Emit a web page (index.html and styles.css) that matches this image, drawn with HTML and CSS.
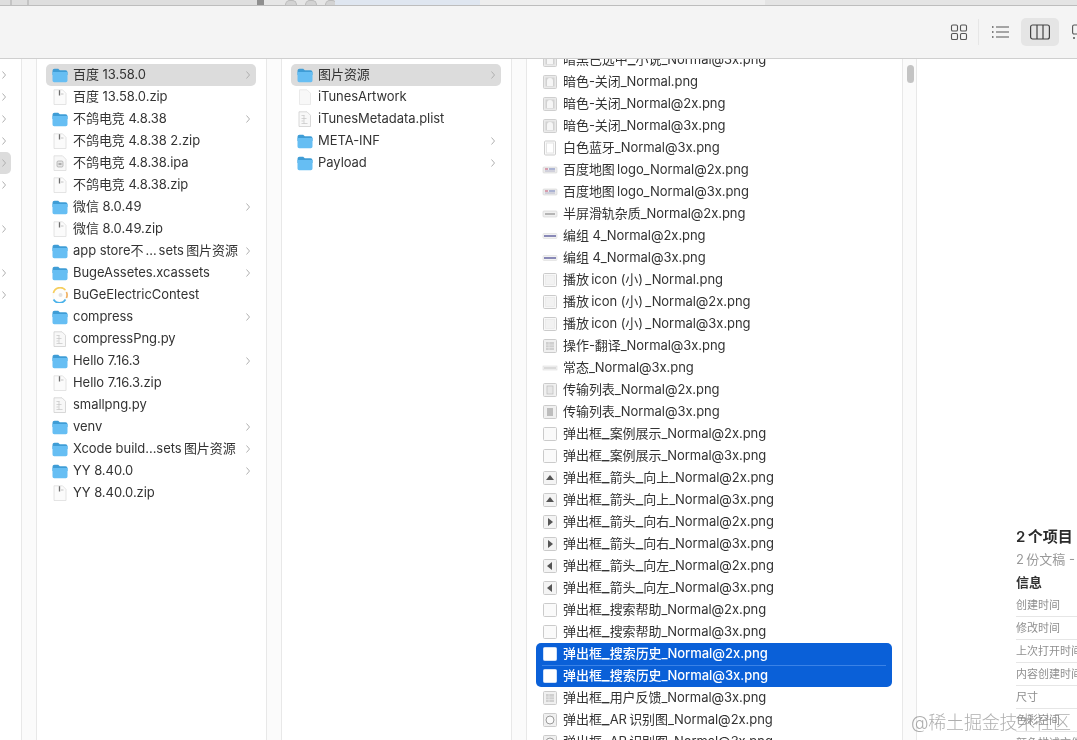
FILE: index.html
```html
<!DOCTYPE html>
<html lang="zh">
<head>
<meta charset="utf-8">
<title>Finder</title>
<link rel="stylesheet" href="styles.css">
</head>
<body>
<svg class="defs" xmlns="http://www.w3.org/2000/svg">
  <symbol id="folder" viewBox="0 0 16 16"><path d="M.5 3.800a2 2 0 0 1 2-2h3.700l1.600 1.500h5.700a2 2 0 0 1 2 2V8H.5z" fill="#3f9dd6"/><path d="M.5 5h15v8.600a1.700 1.700 0 0 1-1.700 1.700H2.200A1.700 1.700 0 0 1 .5 13.600z" fill="#66bef3"/></symbol>
  <symbol id="zip" viewBox="0 0 16 16"><path d="M2 .8h8.500l3.500 3.500v11.200H2z" fill="#fbfbfb" stroke="#dddddd" stroke-width=".8"/><path d="M7.500 1.200v5.300" stroke="#6e6e6e" stroke-width="1.300"/><path d="M9 5h2.500" stroke="#c4c4c4"/></symbol>
  <symbol id="blankdoc" viewBox="0 0 16 16"><path d="M2.500 .8h7.500l3.500 3.500v11.200h-11z" fill="#f8f8f8" stroke="#e6e6e6" stroke-width=".8"/></symbol>
  <symbol id="doc" viewBox="0 0 16 16"><path d="M2 .8h8l3.500 3.500v11.200H2z" fill="#f8f8f8" stroke="#cfcfcf" stroke-width=".8"/><path d="M4.500 4.500h3M4.500 7.500h5M4.500 10h2M4.500 12.500h6M7 4.500v8" stroke="#c4c4c4" stroke-width=".7" fill="none"/></symbol>
  <symbol id="ipa" viewBox="0 0 16 16"><path d="M2 .8h8.500l3.500 3.500v11.200H2z" fill="#f8f8f8" stroke="#dcdcdc" stroke-width=".8"/><rect x="5" y="6" width="6" height="6" rx="1.200" fill="#e6e6e6" stroke="#999" stroke-width=".6"/><path d="M6.500 9h3" stroke="#777"/></symbol>
  <symbol id="app" viewBox="0 0 16 16"><circle cx="8" cy="8" r="7.200" fill="#fdfdfd" stroke="#eee" stroke-width=".5"/><path d="M1.400 6a7 7 0 0 1 12-3" fill="none" stroke="#f6ce5c" stroke-width="1.700"/><path d="M14.400 5a7 7 0 0 1 0 6" fill="none" stroke="#f2b264" stroke-width="1.700"/><path d="M13.500 12.500a7 7 0 0 1-12 0" fill="none" stroke="#4ab2ea" stroke-width="1.700"/><circle cx="8.500" cy="8" r="2" fill="#e2e2e2"/></symbol>
  <symbol id="thumb" viewBox="0 0 16 16"><rect x="1.500" y="1.500" width="13" height="13" rx="1" fill="#fafafa" stroke="#cbcbcb"/></symbol>
  <symbol id="face" viewBox="0 0 16 16"><rect x="1.500" y="1.500" width="13" height="13" rx="1" fill="#eaeaea" stroke="#cfcfcf"/><rect x="3.500" y="3.500" width="9" height="9" fill="#d2d2d2"/><path d="M5 12V7a3 3 0 0 1 6 0v5z" fill="#f6f6f6"/></symbol>
  <symbol id="narrow" viewBox="0 0 16 16"><rect x="2.500" y="1" width="11" height="14" rx="1" fill="#fafafa" stroke="#cdcdcd"/><rect x="4.500" y="3" width="7" height="10" fill="#fff" stroke="#e4e4e4"/></symbol>
  <symbol id="logo" viewBox="0 0 16 16"><rect x="1" y="5" width="14" height="6" rx="1" fill="#ececec" stroke="#d4d4d4" stroke-width=".6"/><path d="M3 7h3" stroke="#c05070" stroke-width="1"/><path d="M7 7h6" stroke="#6a7ab8" stroke-width="1"/><path d="M3 9h10" stroke="#a8a8c4" stroke-width=".8"/></symbol>
  <symbol id="bar" viewBox="0 0 16 16"><rect x="1" y="5" width="14" height="6" rx="1" fill="#f0f0f0" stroke="#d0d0d0" stroke-width=".6"/><rect x="3" y="7" width="10" height="2" fill="#b5b5b5"/></symbol>
  <symbol id="barp" viewBox="0 0 16 16"><rect x="1" y="5.500" width="14" height="5" rx="1" fill="#f2f2f2" stroke="#dcdcdc" stroke-width=".6"/><rect x="2" y="7.200" width="12" height="1.600" fill="#6f6fa8"/></symbol>
  <symbol id="line" viewBox="0 0 16 16"><rect x="1" y="6" width="14" height="4" fill="#f2f2f2" stroke="#dcdcdc" stroke-width=".6"/><rect x="2" y="7.500" width="12" height="1" fill="#c2c2c2"/></symbol>
  <symbol id="play" viewBox="0 0 16 16"><rect x="1.500" y="1.500" width="13" height="13" rx="1" fill="#f8f8f8" stroke="#cbcbcb"/><rect x="3.500" y="3.500" width="9" height="9" fill="#f2f2f2" stroke="#e4e4e4" stroke-width=".5"/></symbol>
  <symbol id="grid" viewBox="0 0 16 16"><rect x="1.500" y="1.500" width="13" height="13" rx="1" fill="#f0f0f0" stroke="#cbcbcb"/><rect x="4" y="4" width="8" height="8" fill="#cfcfcf"/><path d="M4 7h8M4 9.500h8M7 4v8" stroke="#eee" stroke-width=".6"/></symbol>
  <symbol id="lines" viewBox="0 0 16 16"><rect x="1.500" y="1.500" width="13" height="13" rx="1" fill="#f0f0f0" stroke="#cbcbcb"/><rect x="5" y="4" width="6" height="8" fill="#e6e6e6" stroke="#bcbcbc" stroke-width=".7"/></symbol>
  <symbol id="lines2" viewBox="0 0 16 16"><rect x="1.500" y="1.500" width="13" height="13" rx="1" fill="#f0f0f0" stroke="#cbcbcb"/><rect x="5" y="4" width="6" height="8" fill="#bdbdbd"/></symbol>
  <symbol id="up" viewBox="0 0 16 16"><rect x="1.500" y="1.500" width="13" height="13" rx="1" fill="#f4f4f4" stroke="#cbcbcb"/><path d="M8 5l4 5H4z" fill="#555"/></symbol>
  <symbol id="right" viewBox="0 0 16 16"><rect x="1.500" y="1.500" width="13" height="13" rx="1" fill="#f4f4f4" stroke="#cbcbcb"/><path d="M6 4l5 4-5 4z" fill="#555"/></symbol>
  <symbol id="left" viewBox="0 0 16 16"><rect x="1.500" y="1.500" width="13" height="13" rx="1" fill="#f4f4f4" stroke="#cbcbcb"/><path d="M10 4l-5 4 5 4z" fill="#555"/></symbol>
  <symbol id="white" viewBox="0 0 16 16"><rect x="1.500" y="1.500" width="13" height="13" rx="1" fill="#fff" stroke="#cfe0f8"/></symbol>
  <symbol id="circle" viewBox="0 0 16 16"><rect x="1.500" y="1.500" width="13" height="13" rx="1" fill="#f0f0f0" stroke="#cbcbcb"/><circle cx="8" cy="8" r="4" fill="#fafafa" stroke="#9a9a9a"/></symbol>
  <symbol id="chev" viewBox="0 0 6 10"><path d="M1.500 1.500L4.500 5 1.500 8.500" fill="none" stroke="#b0b0b0" stroke-width="1"/></symbol>
</svg>

<div class="window">
  <div class="backdrop">
    <div class="bd bd-a"><i class="tick"></i><i class="tick"></i></div><div class="bd bd-dark"></div><div class="bd bd-b"><i class="dot"></i><i class="dot"></i><i class="dot"></i></div><div class="bd bd-blue"></div><div class="bd bd-c"></div><div class="bd bd-d"></div>
  </div>
  <header class="toolbar">
    <svg class="tool" width="18" height="18" viewBox="0 0 18 18"><g fill="none" stroke="#555" stroke-width="1.100"><rect x="1.500" y="2" width="6" height="6" rx="1.300"/><rect x="10.500" y="2" width="6" height="6" rx="1.300"/><rect x="1.500" y="10.500" width="6" height="6" rx="1.300"/><rect x="10.500" y="10.500" width="6" height="6" rx="1.300"/></g></svg>
    <span class="tool-sep"></span>
    <svg class="tool tool-list" width="18" height="18" viewBox="0 0 18 18"><path d="M5 4h13M5 9h13M5 14h13" stroke="#555" stroke-width="1.100"/><path d="M1 4h1.500M1 9h1.500M1 14h1.500" stroke="#555" stroke-width="1.600"/></svg>
    <span class="tool-active"><svg width="20" height="16" viewBox="0 0 20 16"><rect x=".6" y="1" width="18.800" height="14" rx="2" fill="none" stroke="#444" stroke-width="1.200"/><path d="M7 1v14M13 1v14" stroke="#444" stroke-width="1.200"/></svg></span>
    <svg class="tool tool-next" width="14" height="18" viewBox="0 0 14 18"><rect x=".6" y="2" width="11" height="9" rx="1.500" fill="none" stroke="#555" stroke-width="1.100"/><path d="M1 15h2M5 15h2" stroke="#555" stroke-width="1.400"/></svg>
  </header>

  <main class="browser">
    <section class="col col0">
      <div class="stub"><svg class="chev"><use href="#chev"/></svg></div>
      <div class="stub"><svg class="chev"><use href="#chev"/></svg></div>
      <div class="stub"><svg class="chev"><use href="#chev"/></svg></div>
      <div class="stub"><svg class="chev"><use href="#chev"/></svg></div>
      <div class="stub stub-on"><svg class="chev"><use href="#chev"/></svg></div>
      <div class="stub"><svg class="chev"><use href="#chev"/></svg></div>
      <div class="stub"></div>
      <div class="stub"><svg class="chev"><use href="#chev"/></svg></div>
      <div class="stub"></div>
      <div class="stub"><svg class="chev"><use href="#chev"/></svg></div>
      <div class="stub"><svg class="chev"><use href="#chev"/></svg></div>
    </section>
    <div class="gutter"></div>

    <section class="col col1">
      <div class="row on"><svg class="ic"><use href="#folder"/></svg><span class="name">百度 13.58.0</span><svg class="chev"><use href="#chev"/></svg></div>
      <div class="row"><svg class="ic"><use href="#zip"/></svg><span class="name">百度 13.58.0.zip</span></div>
      <div class="row"><svg class="ic"><use href="#folder"/></svg><span class="name">不鸽电竞 4.8.38</span><svg class="chev"><use href="#chev"/></svg></div>
      <div class="row"><svg class="ic"><use href="#zip"/></svg><span class="name">不鸽电竞 4.8.38 2.zip</span></div>
      <div class="row"><svg class="ic"><use href="#ipa"/></svg><span class="name">不鸽电竞 4.8.38.ipa</span></div>
      <div class="row"><svg class="ic"><use href="#zip"/></svg><span class="name">不鸽电竞 4.8.38.zip</span></div>
      <div class="row"><svg class="ic"><use href="#folder"/></svg><span class="name">微信 8.0.49</span><svg class="chev"><use href="#chev"/></svg></div>
      <div class="row"><svg class="ic"><use href="#zip"/></svg><span class="name">微信 8.0.49.zip</span></div>
      <div class="row"><svg class="ic"><use href="#folder"/></svg><span class="name">app store不<span class="el">…</span>sets&#8201;图片资源</span><svg class="chev"><use href="#chev"/></svg></div>
      <div class="row"><svg class="ic"><use href="#folder"/></svg><span class="name">BugeAssetes.xcassets</span><svg class="chev"><use href="#chev"/></svg></div>
      <div class="row"><svg class="ic"><use href="#app"/></svg><span class="name">BuGeElectricContest</span></div>
      <div class="row"><svg class="ic"><use href="#folder"/></svg><span class="name">compress</span><svg class="chev"><use href="#chev"/></svg></div>
      <div class="row"><svg class="ic"><use href="#doc"/></svg><span class="name">compressPng.py</span></div>
      <div class="row"><svg class="ic"><use href="#folder"/></svg><span class="name">Hello 7.16.3</span><svg class="chev"><use href="#chev"/></svg></div>
      <div class="row"><svg class="ic"><use href="#zip"/></svg><span class="name">Hello 7.16.3.zip</span></div>
      <div class="row"><svg class="ic"><use href="#doc"/></svg><span class="name">smallpng.py</span></div>
      <div class="row"><svg class="ic"><use href="#folder"/></svg><span class="name">venv</span><svg class="chev"><use href="#chev"/></svg></div>
      <div class="row"><svg class="ic"><use href="#folder"/></svg><span class="name">Xcode build...sets&#8201;图片资源</span><svg class="chev"><use href="#chev"/></svg></div>
      <div class="row"><svg class="ic"><use href="#folder"/></svg><span class="name">YY 8.40.0</span><svg class="chev"><use href="#chev"/></svg></div>
      <div class="row"><svg class="ic"><use href="#zip"/></svg><span class="name">YY 8.40.0.zip</span></div>
    </section>
    <div class="gutter"></div>

    <section class="col col2">
      <div class="row on"><svg class="ic"><use href="#folder"/></svg><span class="name">图片资源</span><svg class="chev"><use href="#chev"/></svg></div>
      <div class="row"><svg class="ic"><use href="#blankdoc"/></svg><span class="name">iTunesArtwork</span></div>
      <div class="row"><svg class="ic"><use href="#doc"/></svg><span class="name">iTunesMetadata.plist</span></div>
      <div class="row"><svg class="ic"><use href="#folder"/></svg><span class="name">META-INF</span><svg class="chev"><use href="#chev"/></svg></div>
      <div class="row"><svg class="ic"><use href="#folder"/></svg><span class="name">Payload</span><svg class="chev"><use href="#chev"/></svg></div>
    </section>
    <div class="gutter"></div>

    <section class="col col3">
      <div class="list3">
        <div class="row"><svg class="ic"><use href="#face"/></svg><span class="name">暗黑已选中<span class="us">_</span>小说_Normal@3x.png</span></div>
        <div class="row"><svg class="ic"><use href="#face"/></svg><span class="name">暗色-关闭_Normal.png</span></div>
        <div class="row"><svg class="ic"><use href="#face"/></svg><span class="name">暗色-关闭_Normal@2x.png</span></div>
        <div class="row"><svg class="ic"><use href="#face"/></svg><span class="name">暗色-关闭_Normal@3x.png</span></div>
        <div class="row"><svg class="ic"><use href="#narrow"/></svg><span class="name">白色蓝牙_Normal@3x.png</span></div>
        <div class="row"><svg class="ic"><use href="#logo"/></svg><span class="name">百度地图&#8201;logo_Normal@2x.png</span></div>
        <div class="row"><svg class="ic"><use href="#logo"/></svg><span class="name">百度地图&#8201;logo_Normal@3x.png</span></div>
        <div class="row"><svg class="ic"><use href="#bar"/></svg><span class="name">半屏滑轨杂质_Normal@2x.png</span></div>
        <div class="row"><svg class="ic"><use href="#barp"/></svg><span class="name">编组 4_Normal@2x.png</span></div>
        <div class="row"><svg class="ic"><use href="#barp"/></svg><span class="name">编组 4_Normal@3x.png</span></div>
        <div class="row"><svg class="ic"><use href="#play"/></svg><span class="name">播放&#8201;icon (小)&#8201;_Normal.png</span></div>
        <div class="row"><svg class="ic"><use href="#play"/></svg><span class="name">播放&#8201;icon (小)&#8201;_Normal@2x.png</span></div>
        <div class="row"><svg class="ic"><use href="#play"/></svg><span class="name">播放&#8201;icon (小)&#8201;_Normal@3x.png</span></div>
        <div class="row"><svg class="ic"><use href="#grid"/></svg><span class="name">操作-翻译_Normal@3x.png</span></div>
        <div class="row"><svg class="ic"><use href="#line"/></svg><span class="name">常态_Normal@3x.png</span></div>
        <div class="row"><svg class="ic"><use href="#lines"/></svg><span class="name">传输列表_Normal@2x.png</span></div>
        <div class="row"><svg class="ic"><use href="#lines2"/></svg><span class="name">传输列表_Normal@3x.png</span></div>
        <div class="row"><svg class="ic"><use href="#thumb"/></svg><span class="name">弹出框<span class="us">_</span>案例展示_Normal@2x.png</span></div>
        <div class="row"><svg class="ic"><use href="#thumb"/></svg><span class="name">弹出框<span class="us">_</span>案例展示_Normal@3x.png</span></div>
        <div class="row"><svg class="ic"><use href="#up"/></svg><span class="name">弹出框<span class="us">_</span>箭头<span class="us">_</span>向上_Normal@2x.png</span></div>
        <div class="row"><svg class="ic"><use href="#up"/></svg><span class="name">弹出框<span class="us">_</span>箭头<span class="us">_</span>向上_Normal@3x.png</span></div>
        <div class="row"><svg class="ic"><use href="#right"/></svg><span class="name">弹出框<span class="us">_</span>箭头<span class="us">_</span>向右_Normal@2x.png</span></div>
        <div class="row"><svg class="ic"><use href="#right"/></svg><span class="name">弹出框<span class="us">_</span>箭头<span class="us">_</span>向右_Normal@3x.png</span></div>
        <div class="row"><svg class="ic"><use href="#left"/></svg><span class="name">弹出框<span class="us">_</span>箭头<span class="us">_</span>向左_Normal@2x.png</span></div>
        <div class="row"><svg class="ic"><use href="#left"/></svg><span class="name">弹出框<span class="us">_</span>箭头<span class="us">_</span>向左_Normal@3x.png</span></div>
        <div class="row"><svg class="ic"><use href="#thumb"/></svg><span class="name">弹出框<span class="us">_</span>搜索帮助_Normal@2x.png</span></div>
        <div class="row"><svg class="ic"><use href="#thumb"/></svg><span class="name">弹出框<span class="us">_</span>搜索帮助_Normal@3x.png</span></div>
        <div class="selection">
          <div class="row"><svg class="ic"><use href="#white"/></svg><span class="name">弹出框<span class="us">_</span>搜索历史_Normal@2x.png</span></div>
          <div class="row"><svg class="ic"><use href="#white"/></svg><span class="name">弹出框<span class="us">_</span>搜索历史_Normal@3x.png</span></div>
        </div>
        <div class="row"><svg class="ic"><use href="#grid"/></svg><span class="name">弹出框<span class="us">_</span>用户反馈_Normal@3x.png</span></div>
        <div class="row"><svg class="ic"><use href="#circle"/></svg><span class="name">弹出框<span class="us">_</span>AR&#8201;识别图_Normal@2x.png</span></div>
        <div class="row"><svg class="ic"><use href="#circle"/></svg><span class="name">弹出框<span class="us">_</span>AR&#8201;识别图_Normal@3x.png</span></div>
      </div>
    </section>
    <div class="scroll-gutter"><span class="thumb"></span></div>

    <aside class="preview">
      <h2 class="pv-title">2&#8201;个项目</h2>
      <p class="pv-sub">2&#8201;份文稿 - 4 KB</p>
      <h3 class="pv-head">信息</h3>
      <div class="pv-row">创建时间</div>
      <div class="pv-row">修改时间</div>
      <div class="pv-row">上次打开时间</div>
      <div class="pv-row">内容创建时间</div>
      <div class="pv-row">尺寸</div>
      <div class="pv-row">色彩空间</div>
      <div class="pv-row">颜色描述文件</div>
    </aside>
  </main>
  <div class="watermark">@稀土掘金技术社区</div>
</div>
</body>
</html>
```
FILE: styles.css
```css
* { box-sizing: border-box; }
html, body { margin: 0; height: 100%; overflow: hidden; background: #fff; }
body { font-family: Inter, "Noto Sans CJK SC", "Noto Sans", sans-serif; font-size: 13px; color: #333; letter-spacing: -.05px; }
.defs { display: none; }
.window { position: relative; width: 1077px; height: 740px; overflow: hidden; display: flex; flex-direction: column; filter: blur(.35px); }

.backdrop { flex: none; height: 6px; display: flex; background: #e0e0e0; border-bottom: 1px solid #bdbdbd; }
.bd { height: 5px; }
.bd-a { width: 257px; background: #dedede; display: flex; gap: 15px; padding-left: 10px; }
.tick { width: 2px; height: 5px; background: #c4c4c4; }
.bd-dark { width: 7px; background: #8f8f8f; }
.bd-b { width: 71px; background: #e6e6e6; display: flex; gap: 8px; padding-left: 21px; }
.dot { flex: none; width: 12px; height: 5px; background: #d3d3d3; border-radius: 6px 6px 0 0; border: 1px solid #bbb; border-bottom: 0; }
.bd-blue { width: 145px; background: #dfe6f0; }
.bd-c { width: 285px; background: #eeeeee; }
.bd-d { flex: 1; background: #e4e4e4; }

.toolbar { flex: none; height: 53px; background: #f4f4f4; border-bottom: 1px solid #cfcfcf; display: flex; align-items: center; padding-left: 950px; overflow: hidden; }
.tool { flex: none; }
.tool-sep { flex: none; width: 1px; height: 26px; margin: 0 12px 0 10px; background: #e6e6e6; }
.tool-list { margin-right: 12px; }
.tool-active { flex: none; width: 38px; height: 28px; border-radius: 5px; background: #e5e5e5; display: flex; align-items: center; justify-content: center; }
.tool-next { margin-left: 13px; }

.browser { flex: 1; min-height: 0; display: flex; }
.col { flex: none; overflow: hidden; padding-top: 5px; }
.col0 { width: 21px; }
.col1 { width: 229px; }
.col2 { width: 229px; }
.col3 { width: 375px; padding-top: 0; }
.list3 { margin-top: -10px; }
.gutter { flex: none; width: 16px; background: #fbfbfb; border-left: 1px solid #e8e8e8; border-right: 1px solid #e8e8e8; }
.scroll-gutter { flex: none; width: 15px; padding: 6px 4px 0 4px; background: #fbfbfb; border-left: 1px solid #e8e8e8; border-right: 1px solid #e8e8e8; }
.thumb { display: block; width: 7px; height: 18px; border-radius: 4px; background: #c4c4c4; }

.stub { height: 22px; width: 11px; display: flex; align-items: center; padding-left: 1px; }
.stub-on { background: #dcdcdc; border-radius: 0 5px 5px 0; }

.row { height: 22px; margin: 0 10px 0 9px; padding: 0 6px; display: flex; align-items: center; gap: 5px; border-radius: 5px; color: #333; white-space: nowrap; }
.row.on { background: #dcdcdc; }
.ic { flex: none; width: 16px; height: 16px; }
.name { flex: 1; min-width: 0; overflow: hidden; line-height: 20px; margin-top: -2px; }
.us { font-size: 17px; line-height: 0; letter-spacing: 0; }
.el { padding: 0 2px; }
.chev { flex: none; width: 6px; height: 10px; }
.row .chev { margin-right: -1px; }

.selection { margin: 0 10px 0 9px; background: #0a60d8; border-radius: 5px; }
.selection .row { margin: 0; color: #fff; font-weight: 500; }
.selection .row + .row { position: relative; }
.selection .row + .row::before { content: ""; position: absolute; left: 6px; right: 6px; top: 0; border-top: 1px solid #3a82e6; }

.preview { flex: 1; min-width: 0; overflow: hidden; padding: 467px 0 0 99px; white-space: nowrap; color: #8f8f8f; font-size: 11px; letter-spacing: 0; }
.pv-title { margin: 0; font-size: 15px; line-height: 22px; font-weight: 600; color: #2b2b2b; }
.pv-sub { margin: 0; font-size: 13px; line-height: 22px; color: #999; }
.pv-head { margin: 1px 0 1px; font-size: 13px; line-height: 22px; font-weight: 600; color: #333; }
.pv-row { height: 23px; line-height: 23px; border-bottom: 1px solid #e6e6e6; }

.watermark { position: absolute; left: 911px; top: 710px; font-size: 18px; line-height: 26px; font-weight: 300; letter-spacing: -.2px; color: rgba(120,120,120,.6); white-space: nowrap; }
```
